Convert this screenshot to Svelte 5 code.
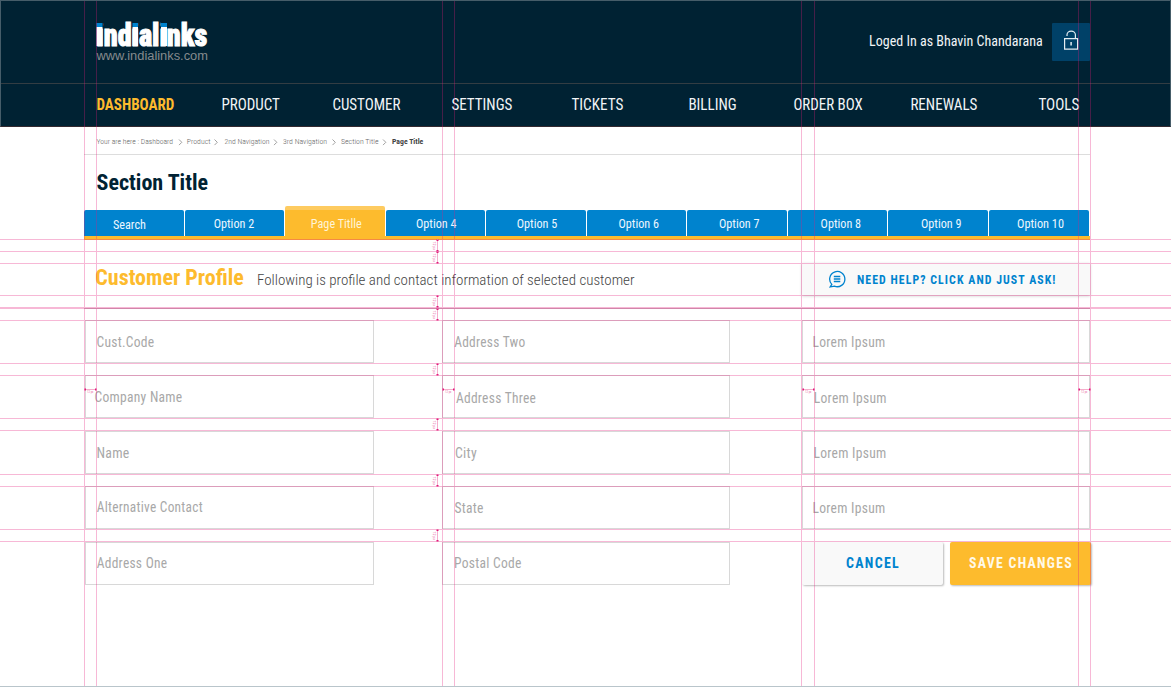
<script>
  const nav = [
    ['DASHBOARD', 78], ['PRODUCT', 58.5], ['CUSTOMER', 68], ['SETTINGS', 61], ['TICKETS', 52],
    ['BILLING', 48.3], ['ORDER BOX', 69.3], ['RENEWALS', 67], ['TOOLS', 41]
  ];
  const crumbs = [
    ['Your are here : Dashboard', 0.5, 76.5], ['Product', 90.8, 23.7], ['2nd Navigation', 128.5, 45],
    ['3rd Navigation', 187, 44], ['Section Title', 245, 37.5], ['Page Title', 296, 31.3]
  ];
  const chevrons = [83, 118.5, 178, 236.5, 287];
  const tabs = [
    ['Search', 29, 33], ['Option 2', 28.7, 40.5], ['Page Titlle', 25.8, 51], ['Option 4', 30, 40.5],
    ['Option 5', 30.8, 40.5], ['Option 6', 31.5, 40.5], ['Option 7', 32, 40.5], ['Option 8', 32.6, 40.5],
    ['Option 9', 33, 40.5], ['Option 10', 28, 47]
  ];
  const columns = [
    [['Cust.Code', 10.5, 58, 25.8], ['Company Name', 8.5, 88, 25.7], ['Name', 10.4, 33.2, 26], ['Alternative Contact', 10.7, 106.2, 25.2], ['Address One', 10.7, 70.7, 24.7]],
    [['Address Two', 11.2, 71.4, 25.8], ['Address Three', 12.9, 80.3, 27], ['City', 12, 22, 26], ['State', 11.4, 29.3, 26], ['Postal Code', 11, 67.7, 24.7]],
    [['Lorem Ipsum', 9.5, 73, 25.8], ['Lorem Ipsum', 10.8, 73, 27], ['Lorem Ipsum', 10.5, 73, 26], ['Lorem Ipsum', 9.5, 73, 26]]
  ];
  const vGuides = [84, 96, 442, 454, 801, 814, 1078, 1090];
  const hGuides = [239, 251, 263, 295, 307, 308, 320, 363, 375, 418, 430, 474, 486, 529, 541];
  const vMarks = [[239, 251], [251, 263], [295, 307], [308, 320], [363, 375], [418, 430], [474, 486], [529, 541]];
  const hMarks = [[84, 96], [442, 454], [802, 814], [1078, 1090]];
</script>

{#snippet label(text, x, y, w, size, height)}
  <svg class="label" width={x + w} {height}>
    <text {x} {y} textLength={w} lengthAdjust="spacingAndGlyphs" font-size={size}>{text}</text>
  </svg>
{/snippet}

<div class="page">
  <header>
    <div class="top">
      <div class="brand">
        <svg width="114" height="44">
          <text class="logo" x="0.300" y="25.500" textLength="111" lengthAdjust="spacingAndGlyphs" font-size="30.500">indialinks</text>
          <path d="M0 0h7v7H0zM36 0h6.500v7H36zM64.500 0h7v7h-7z" fill="#002233" />
          <path d="M.5 7h6v19h-6zM36.500 7h5.500v19h-5.500zM65 7h6v19h-6z" fill="#fff" />
          <path d="M.5 3h6v4h-6zM36.500 3h5.500v4h-5.500zM65 3h6v4h-6z" fill="#0083ce" />
          <text class="site" x="0.500" y="40" textLength="111.500" lengthAdjust="spacingAndGlyphs" font-size="12">www.indialinks.com</text>
        </svg>
      </div>
      <div class="user">{@render label('Loged In as Bhavin Chandarana', 0, 26, 173.8, 14.300, 42)}</div>
      <button class="lock" aria-label="Log out">
        <svg width="38" height="38" fill="none" stroke="#e4edf2" stroke-width="1.200">
          <path d="M12.600 15.600h13v10.500h-13zM15 13v-1.200a4.200 3.700 0 0 1 8.400 0v3.800" />
          <path d="M19.100 19v3.500" stroke-width="1.500" />
        </svg>
      </button>
    </div>
    <nav>
      {#each nav as [text, w], i}
        <a class:active={i === 0}>{@render label(text, 0.4, 25.6, w, 15.600, 42)}</a>
      {/each}
    </nav>
  </header>

  <main>
    <div class="crumbs">
      <svg width="700" height="27">
        {#each crumbs as [text, x, w], i}
          <text {x} y="17" textLength={w} lengthAdjust="spacingAndGlyphs" font-size="7.300" class:current={i === 5}>{text}</text>
        {/each}
        {#each chevrons as x}
          <path d="M{x} 12.500l2.800 2.800-2.800 2.800" fill="none" stroke="#888" stroke-width=".8" />
        {/each}
      </svg>
    </div>
    <h1>{@render label('Section Title', 12.5, 35, 111.500, 22.500, 51)}</h1>
    <div class="tabs">
      {#each tabs as [text, x, w], i}
        <div class="tab" class:active={i === 2}>{@render label(text, x, i ? 18 : 19, w, 12.300, 26)}</div>
      {/each}
    </div>

    <section class="intro">
      <h2>{@render label('Customer Profile', 0.3, 22, 148.500, 22.500, 32)}</h2>
      <div class="desc">{@render label('Following is profile and contact information of selected customer', 0, 22, 377.5, 15.300, 32)}</div>
      <button class="help">
        <svg class="chat" width="18" height="18" fill="none" stroke="#0083ce" stroke-width="1.300">
          <path d="M3.800 14.400A7.600 7.600 0 1 1 6.500 16.200L2.200 16.800z" />
          <path d="M5.800 6.500h6.500M5.800 9h6.500M5.800 11.500h6.500" />
        </svg>
        {@render label('NEED HELP? CLICK AND JUST ASK!', 0, 20.8, 199.5, 12.300, 32)}
      </button>
    </section>

    <form>
      {#each columns as fields, c}
        <div class="column">
          {#each fields as [text, x, w, y]}
            <div class="field">{@render label(text, x, y, w, 14.500, 41)}</div>
          {/each}
          {#if c === 2}
            <div class="actions">
              <button type="button" class="cancel">{@render label('CANCEL', 1, 26.2, 54, 14, 43)}</button>
              <button type="button" class="save">{@render label('SAVE CHANGES', 0, 26.2, 104, 14, 43)}</button>
            </div>
          {/if}
        </div>
      {/each}
    </form>
  </main>

  <svg class="guides" width="1171" height="687">
    <g class="lines">
      {#each vGuides as x}<rect {x} y="1" width="1" height="686" />{/each}
      {#each hGuides as y}<rect x="0" {y} width="1171" height="1" />{/each}
    </g>
    {#each vMarks as [a, b]}
      <path d="M437.500 {a}V{b}" stroke="#f5aecb" />
      <path d="M436.500 {a + .5}h2v1.500h-2zM436.500 {b - 1}h2v1.500h-2z" fill="#e0187a" />
      <text transform="translate(433.300 {a + 2.5}) rotate(90)" font-size="4">12 px</text>
    {/each}
    {#each hMarks as [a, b]}
      <path d="M{a} 389.500H{b}" stroke="#f5aecb" />
      <path d="M{a + .5} 388.500h1.500v2h-1.500zM{b - 1} 388.500h1.500v2h-1.500z" fill="#e0187a" />
      <text x={a + 3} y="393.300" font-size="3">12 px</text>
    {/each}
  </svg>
</div>

<style>
  :global(body) { background: #fff; }
  .page { position: relative; width: 1171px; height: 687px; box-sizing: border-box; overflow: hidden; border-bottom: 1px solid #b9c5cb; font-family: 'Roboto Condensed', Roboto, sans-serif; font-stretch: 75%; }
  button { border: 0; padding: 0; font: inherit; font-stretch: inherit; }
  h1, h2 { margin: 0; }
  .label, .brand svg { display: block; overflow: visible; }
  .label { fill: currentColor; }
  header { height: 127px; box-sizing: border-box; background: #002233; color: #f2f5f7; border: 1px solid #465d69; border-bottom-color: #33292f; }
  .top { height: 82px; display: flex; align-items: flex-start; padding: 0 80px 0 95px; border-bottom: 1px solid #333d43; }
  .brand { padding-top: 19px; flex: 1; }
  .logo { font-weight: 900; fill: #fff; stroke: #fff; stroke-width: 1; }
  .site { font-family: 'Liberation Sans', sans-serif; fill: #858b8e; font-stretch: normal; }
  .user { margin: 19px 9px 0 0; }
  .lock { width: 38px; height: 38px; margin-top: 22px; background: #004168; border-radius: 1px; }
  nav { width: 1039px; margin-left: 76.500px; display: grid; grid-template-columns: repeat(9, 1fr); justify-items: center; }
  nav .active { color: #fdbb2d; font-weight: 700; }
  main { width: 1006px; margin-left: 84px; }
  .crumbs { height: 27px; padding-left: 12px; border-bottom: 1px solid #ddd; fill: #666; font-weight: 300; }
  .current { font-weight: 700; fill: #444; }
  h1 { color: #002233; height: 51px; }
  .tabs { display: grid; grid-template-columns: repeat(10, 1fr); width: 1005.500px; height: 34px; box-sizing: border-box; align-items: end; border-bottom: 4px solid #fdbb2d; }
  .tab { height: 26px; background: #0083ce; color: #edf7ff; border-radius: 2px 2px 0 0; margin-right: 1px; }
  .tab.active { height: 30px; box-sizing: border-box; background: #fdbb2d; border-top: 4px solid #fecb60; color: #fff4d8; }
  .intro { display: flex; height: 45px; padding-top: 23px; border-bottom: 1px solid #c9b6c0; }
  h2 { margin-left: 11px; color: #fdbb2d; }
  .desc { margin-left: 13px; color: #444; font-weight: 300; flex: 1; }
  .help { width: 288.500px; height: 32px; box-sizing: border-box; display: flex; align-items: center; gap: 11px; padding-left: 26px; background: #f9f9f9; box-shadow: 0 1px 3px #0003; color: #0083ce; font-weight: 700; letter-spacing: 1.100px; }
  form { display: grid; grid-template-columns: 357px 360px 288px; padding: 11px 0 0 1px; }
  .column { width: 288.500px; display: flex; flex-direction: column; gap: 12.400px; }
  .column + .column { width: 288px; }
  .field { height: 43px; box-sizing: border-box; border: 1px solid #d8d8d8; color: #a8a8a8; font-weight: 400; letter-spacing: .3px; }
  .actions { display: flex; gap: 7px; height: 43px; }
  .actions button { width: 141px; display: flex; justify-content: center; border-radius: 2px; box-shadow: 1px 1px 2px #0004; font-weight: 700; flex: none; letter-spacing: 1.300px; }
  .cancel { background: #f9f9f9; color: #0083ce; }
  .save { background: #fdbb2d; color: #fff9e8; }
  .guides { position: absolute; left: 0; top: 0; pointer-events: none; }
  .lines { fill: #e6197a; opacity: .3; }
  .guides text { fill: #ea6ba5; }
</style>
